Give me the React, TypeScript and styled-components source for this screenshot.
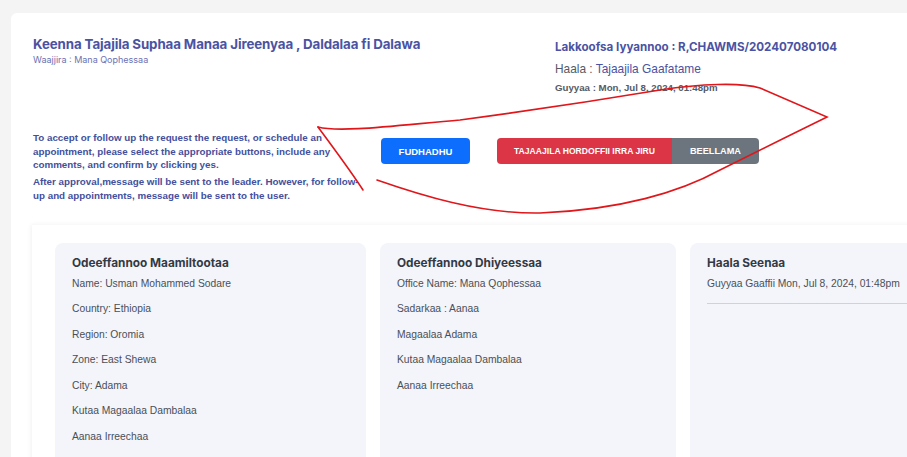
import React from "react";
import styled, { createGlobalStyle } from "styled-components";

const GlobalStyle = createGlobalStyle`
  html, body { margin: 0; padding: 0; background: #f4f4f5; overflow: hidden; }
  body { font-family: "Liberation Sans", Arial, sans-serif; }
  * { box-sizing: border-box; }
`;

const Page = styled.div`
  position: relative;
  width: 907px;
  height: 457px;
  padding: 13px 0 0 11px;
  overflow: hidden;
`;

const Sheet = styled.div`
  width: 940px;
  background: #ffffff;
  border-radius: 6px;
  padding: 23px 0 0 22px;
  min-height: 480px;
`;

const Header = styled.div`
  display: grid;
  grid-template-columns: 522px 1fr;
`;

const Title = styled.h1`
  margin: 0;
  font-family: Inter, "Liberation Sans", sans-serif;
  font-size: 13.3px;
  font-weight: 700;
  color: #4a53a3;
  line-height: 17px;
  letter-spacing: -0.1px;
`;

const SubTitle = styled.div`
  font-family: Inter, "Liberation Sans", sans-serif;
  font-size: 9px;
  color: #6b72b4;
  line-height: 12px;
  margin-top: 1px;
`;

const Meta = styled.div`
  display: flex;
  flex-direction: column;
  padding-top: 4px;
`;

const MetaNumber = styled.div`
  font-family: Inter, "Liberation Sans", sans-serif;
  font-size: 11.6px;
  font-weight: 700;
  color: #4a53a3;
  line-height: 15px;
`;

const MetaLine = styled.div<{ $bold?: boolean }>`
  font-size: ${(p) => (p.$bold ? "9.7px" : "11.9px")};
  font-weight: ${(p) => (p.$bold ? 700 : 400)};
  color: #555b66;
  line-height: 14px;
  margin-top: ${(p) => (p.$bold ? "5px" : "7px")};
`;

const Accent = styled.span`
  color: #4a53a3;
`;

const ActionRow = styled.div`
  display: flex;
  align-items: flex-start;
  margin-top: 36px;
`;

const Notes = styled.div`
  width: 332px;
  font-size: 9.8px;
  font-weight: 700;
  color: #44509d;
  line-height: 13.5px;
`;

const Note = styled.p`
  margin: 0 0 3.5px 0;
`;

const Button = styled.button<{ $tone: "blue" | "red" | "gray"; $joined?: "left" | "right" }>`
  border: none;
  height: 26px;
  padding: 0;
  white-space: nowrap;
  font-family: "Liberation Sans", Arial, sans-serif;
  font-size: 9.5px;
  font-weight: 700;
  color: #ffffff;
  background: ${(p) => (p.$tone === "blue" ? "#0d6efd" : p.$tone === "red" ? "#dc3545" : "#6c757d")};
  border-radius: ${(p) =>
    p.$joined === "left" ? "4px 0 0 4px" : p.$joined === "right" ? "0 4px 4px 0" : "4px"};
`;

const BlueButton = styled(Button)`
  width: 89px;
  margin-top: 7px;
  margin-left: 16px;
`;

const RedButton = styled(Button)`
  width: 175px;
  font-size: 8.6px;
`;

const GrayButton = styled(Button)`
  width: 87px;
  font-size: 9.2px;
`;

const Group = styled.div`
  display: flex;
  margin-top: 7px;
  margin-left: 27px;
`;

const Section = styled.div`
  margin-top: 19px;
  margin-left: -1px;
  background: #ffffff;
  box-shadow: -2px 0 4px rgba(0, 0, 0, 0.035), 0 -2px 4px rgba(0, 0, 0, 0.02);
  padding: 18px 0 0 23px;
  min-height: 260px;
`;

const Cards = styled.div`
  display: grid;
  grid-template-columns: 311px 296px 300px;
  gap: 14px;
`;

const Card = styled.div`
  background: #f3f5fb;
  border-radius: 8px;
  padding: 12px 17px 30px;
  min-height: 240px;
`;

const CardTitle = styled.h2`
  margin: 0;
  font-family: Inter, "Liberation Sans", sans-serif;
  font-size: 11.8px;
  font-weight: 700;
  color: #333a44;
  line-height: 16px;
`;

const Item = styled.div`
  font-size: 10.3px;
  color: #4a4f57;
  line-height: 12px;
  margin-top: 13.6px;
  &:first-of-type { margin-top: 7px; }
`;

const Rule = styled.hr`
  border: none;
  border-top: 1px solid #cfd2db;
  margin: 13px 0 0 0;
`;

const Scribble = styled.svg`
  position: absolute;
  left: 0;
  top: 0;
  pointer-events: none;
`;

export default function App() {
  return (
    <>
      <GlobalStyle />
      <Page>
        <Sheet>
          <Header>
            <div>
              <Title>Keenna Tajajila Suphaa Manaa Jireenyaa , Daldalaa fi Dalawa</Title>
              <SubTitle>Waajjira : Mana Qophessaa</SubTitle>
            </div>
            <Meta>
              <MetaNumber>Lakkoofsa Iyyannoo : R,CHAWMS/202407080104</MetaNumber>
              <MetaLine>
                Haala : <Accent>Tajaajila Gaafatame</Accent>
              </MetaLine>
              <MetaLine $bold>Guyyaa : Mon, Jul 8, 2024, 01:48pm</MetaLine>
            </Meta>
          </Header>

          <ActionRow>
            <Notes>
              <Note>
                To accept or follow up the request the request, or schedule an appointment, please
                select the appropriate buttons, include any comments, and confirm by clicking yes.
              </Note>
              <Note>
                After approval,message will be sent to the leader. However, for follow-up and
                appointments, message will be sent to the user.
              </Note>
            </Notes>
            <BlueButton $tone="blue">FUDHADHU</BlueButton>
            <Group>
              <RedButton $tone="red" $joined="left">
                TAJAAJILA HORDOFFII IRRA JIRU
              </RedButton>
              <GrayButton $tone="gray" $joined="right">
                BEELLAMA
              </GrayButton>
            </Group>
          </ActionRow>

          <Section>
            <Cards>
              <Card>
                <CardTitle>Odeeffannoo Maamiltootaa</CardTitle>
                <Item>Name: Usman Mohammed Sodare</Item>
                <Item>Country: Ethiopia</Item>
                <Item>Region: Oromia</Item>
                <Item>Zone: East Shewa</Item>
                <Item>City: Adama</Item>
                <Item>Kutaa Magaalaa Dambalaa</Item>
                <Item>Aanaa Irreechaa</Item>
              </Card>
              <Card>
                <CardTitle>Odeeffannoo Dhiyeessaa</CardTitle>
                <Item>Office Name: Mana Qophessaa</Item>
                <Item>Sadarkaa : Aanaa</Item>
                <Item>Magaalaa Adama</Item>
                <Item>Kutaa Magaalaa Dambalaa</Item>
                <Item>Aanaa Irreechaa</Item>
              </Card>
              <Card>
                <CardTitle>Haala Seenaa</CardTitle>
                <Item>Guyyaa Gaaffii Mon, Jul 8, 2024, 01:48pm</Item>
                <Rule />
              </Card>
            </Cards>
          </Section>
        </Sheet>

        <Scribble width="907" height="457" viewBox="0 0 907 457">
          <path
            d="M 318 127 C 340 133, 400 125, 460 120 C 520 112, 600 100, 660 90 C 700 84, 740 82, 760 88 L 827 117 C 790 135, 760 150, 720 170 C 680 192, 620 210, 540 213 C 480 214, 420 195, 377 180"
            fill="none"
            stroke="#e0161b"
            strokeWidth="1.6"
            strokeLinecap="round"
          />
          <path d="M 318 127 C 335 150, 350 170, 363 190" fill="none" stroke="#e0161b" strokeWidth="1.6" strokeLinecap="round" />
        </Scribble>
      </Page>
    </>
  );
}
